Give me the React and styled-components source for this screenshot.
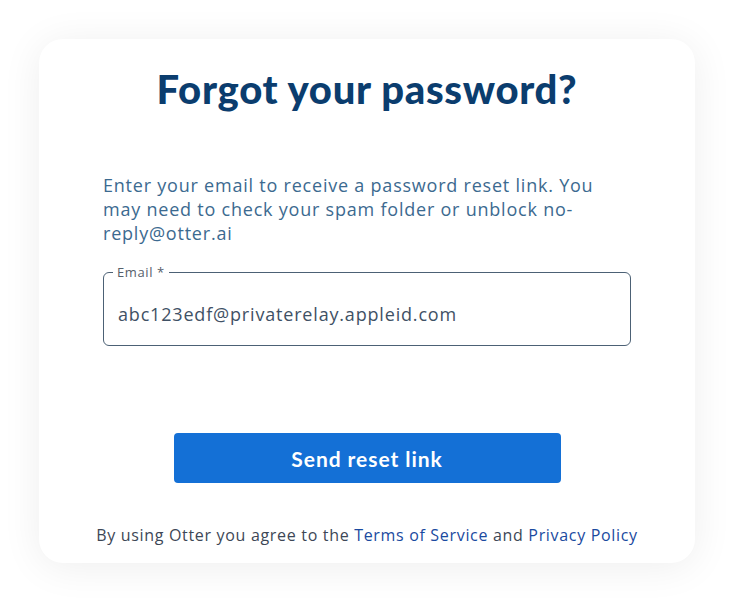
import React from "react";
import styled, { createGlobalStyle } from "styled-components";

const GlobalStyle = createGlobalStyle`
  html, body {
    margin: 0;
    padding: 0;
    background: #ffffff;
  }
  body {
    font-family: "Open Sans", "Noto Sans", sans-serif;
  }
`;

const Page = styled.div`
  width: 734px;
  height: 603px;
  box-sizing: border-box;
  padding: 39px 39px 40px 39px;
  display: flex;
`;

const Card = styled.div`
  flex: 1;
  min-width: 0;
  background: #fff;
  border-radius: 24px;
  box-shadow: 0 4px 40px rgba(0, 0, 0, 0.07);
  display: flex;
  flex-direction: column;
  align-items: center;
  padding: 24px 64px 0;
`;

const Title = styled.h1`
  margin: 0;
  font-family: "Lato", sans-serif;
  font-weight: 900;
  font-size: 40px;
  line-height: 52px;
  color: #0b3d6e;
  letter-spacing: 0.7px;
`;

const Intro = styled.p`
  align-self: stretch;
  margin: 58px 0 0;
  padding-right: 16px;
  font-size: 18px;
  line-height: 24px;
  color: #3c6a90;
  letter-spacing: 0.78px;
`;

const Field = styled.fieldset`
  align-self: stretch;
  margin: 20px 0 0;
  padding: 0 14px;
  height: 81px;
  box-sizing: border-box;
  border: 1px solid #4c6175;
  border-radius: 6px;
`;

const Legend = styled.legend`
  padding: 0 4px;
  margin-left: -5px;
  font-size: 13px;
  line-height: 14px;
  color: #56606b;
  letter-spacing: 0.6px;
`;

const Value = styled.div`
  padding-top: 23px;
  font-size: 18px;
  line-height: 24px;
  color: #3f5165;
  letter-spacing: 0.82px;
`;

const Button = styled.button`
  margin-top: 87px;
  width: 387px;
  height: 50px;
  border: none;
  border-radius: 4px;
  background: #1470d6;
  color: #fff;
  font-family: "Lato", sans-serif;
  font-weight: 700;
  font-size: 21px;
  letter-spacing: 0.95px;
`;

const Footer = styled.p`
  margin: 41px 0 0;
  font-size: 16px;
  line-height: 22px;
  color: #3d4756;
  letter-spacing: 0.68px;
  white-space: nowrap;
`;

const Link = styled.a`
  color: #1a4aa0;
  text-decoration: none;
`;

export default function App() {
  return (
    <>
      <GlobalStyle />
      <Page>
        <Card>
          <Title>Forgot your password?</Title>
          <Intro>
            Enter your email to receive a password reset link. You may need to
            check your spam folder or unblock no-reply@otter.ai
          </Intro>
          <Field>
            <Legend>Email *</Legend>
            <Value>abc123edf@privaterelay.appleid.com</Value>
          </Field>
          <Button>Send reset link</Button>
          <Footer>
            By using Otter you agree to the <Link href="#">Terms of Service</Link>{" "}
            and <Link href="#">Privacy Policy</Link>
          </Footer>
        </Card>
      </Page>
    </>
  );
}
